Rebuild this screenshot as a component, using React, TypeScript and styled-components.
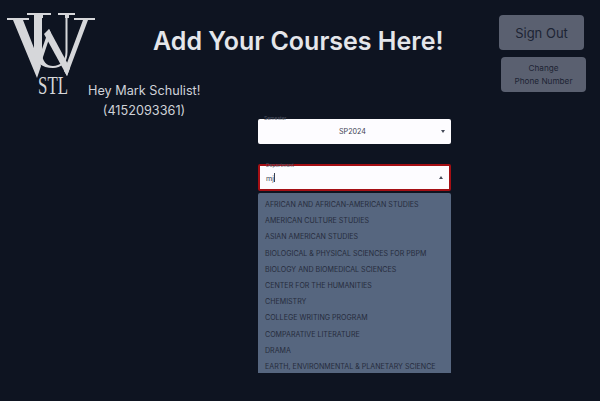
import styled, { createGlobalStyle } from "styled-components";

const departments = [
  "AFRICAN AND AFRICAN-AMERICAN STUDIES",
  "AMERICAN CULTURE STUDIES",
  "ASIAN AMERICAN STUDIES",
  "BIOLOGICAL & PHYSICAL SCIENCES FOR PBPM",
  "BIOLOGY AND BIOMEDICAL SCIENCES",
  "CENTER FOR THE HUMANITIES",
  "CHEMISTRY",
  "COLLEGE WRITING PROGRAM",
  "COMPARATIVE LITERATURE",
  "DRAMA",
  "EARTH, ENVIRONMENTAL & PLANETARY SCIENCE",
];

const GlobalStyle = createGlobalStyle`
  html, body {
    margin: 0;
    padding: 0;
    background: #0e1421;
    overflow: hidden;
  }
  * {
    box-sizing: border-box;
  }
`;

const Page = styled.div`
  width: 600px;
  height: 401px;
  overflow: hidden;
  background: #0e1421;
  font-family: Inter, "Noto Sans", sans-serif;
  display: flex;
  flex-direction: column;
`;

const Header = styled.header`
  height: 119px;
  flex-shrink: 0;
  padding-left: 7px;
  display: grid;
  grid-template-columns: 81px 65px 1fr 114px;
  grid-template-rows: 72px 1fr;
`;

const LogoSlot = styled.div`
  grid-column: 1;
  grid-row: 1 / 3;
  padding-top: 12px;
`;

const Greeting = styled.div`
  grid-column: 2 / 4;
  grid-row: 2;
  width: 112px;
  padding-top: 9px;
  text-align: center;
  white-space: nowrap;
  color: #cfd2d8;
  font-size: 12.7px;
  line-height: 20px;
`;

const Title = styled.h1`
  grid-column: 3;
  grid-row: 1;
  margin: 25px 0 0;
  color: #e4e6ea;
  font-size: 25px;
  line-height: 32px;
  font-weight: 600;
  white-space: nowrap;
`;

const Actions = styled.div`
  grid-column: 4;
  grid-row: 1 / 3;
  display: flex;
  flex-direction: column;
  gap: 7px;
  padding: 15px 0 0 13px;
`;

const HeaderButton = styled.button<{ $small?: boolean }>`
  border: none;
  border-radius: 4px;
  background: #5a6070;
  color: #1d2434;
  font-family: inherit;
  padding: 0;
  width: 85px;
  height: 35px;
  margin-left: ${(p) => (p.$small ? "2px" : "0")};
  font-size: ${(p) => (p.$small ? "8.2px" : "13px")};
  line-height: ${(p) => (p.$small ? "12.5px" : "18px")};
`;

const FormColumn = styled.main`
  width: 193px;
  margin-left: 258px;
  display: flex;
  flex-direction: column;
`;

const FieldLabel = styled.span`
  position: absolute;
  left: 6px;
  top: -4px;
  color: #4b5160;
  font-size: 5px;
  line-height: 6px;
`;

const Select = styled.div<{ $active?: boolean }>`
  position: relative;
  height: ${(p) => (p.$active ? "27px" : "25px")};
  display: flex;
  align-items: center;
  padding: 0 6px;
  background: #fdfcff;
  border-radius: 2px;
  border: ${(p) => (p.$active ? "2px solid #a50f14" : "none")};
  color: #3c4150;
  font-size: 7.2px;
  margin-bottom: ${(p) => (p.$active ? "2px" : "20px")};
`;

const SelectValue = styled.span<{ $centered?: boolean }>`
  flex: 1;
  text-align: ${(p) => (p.$centered ? "center" : "left")};
`;

const Caret = styled.span<{ $up?: boolean }>`
  width: 0;
  height: 0;
  border-left: 2.5px solid transparent;
  border-right: 2.5px solid transparent;
  ${(p) =>
    p.$up
      ? "border-bottom: 3px solid #444a58;"
      : "border-top: 3px solid #444a58;"}
`;

const Cursor = styled.span`
  display: inline-block;
  width: 1px;
  height: 9px;
  background: #3c4150;
  vertical-align: -1px;
`;

const Menu = styled.ul`
  list-style: none;
  margin: 0;
  padding: 4px 0 0;
  height: 180px;
  overflow: hidden;
  background: #56667f;
  border-radius: 2px 2px 0 0;
`;

const MenuItem = styled.li`
  height: 16.2px;
  line-height: 16.2px;
  padding-left: 7px;
  color: #262c3d;
  font-size: 7.1px;
  white-space: nowrap;
`;

// drawn in page coordinates, so the viewBox starts where the logo sits
const Logo = () => (
  <svg width="88" height="88" viewBox="7 12 88 88" fill="#d6d7da">
    {/* W: outer serifs and strokes */}
    <polygon points="7,18 29,18 29,20 23,20 41,66 37,78 13,20 7,20" />
    <polygon points="74,18 95,18 95,20 88,20 67,76 64,71 83,20 74,20" />
    <polygon points="44,34 49,29 70,68 67,76" />
    <polygon points="37,75 35,69 49,29 51,33" />
    {/* U: tall stems and bowl */}
    <polygon points="27,13 51,13 51,15 43,15 43,18 34,18 34,15 27,15" />
    <polygon points="58,13 75,13 75,15 69,15 69,18 65,18 65,15 58,15" />
    <path d="M34 15 L42 15 L42 52 C42 62 47 66 53 66 C60 66 65.5 61 65.5 52 L65.5 15 L67.5 15 L67.5 52 C67.5 63 61 68 53 68 C42 68 34 62 34 52 Z" />
    <text
      x="38"
      y="94"
      fontFamily="'Liberation Serif', serif"
      fontSize="26"
      textLength="30"
      lengthAdjust="spacingAndGlyphs"
    >
      STL
    </text>
  </svg>
);

const App = () => {
  return (
    <Page>
      <GlobalStyle />
      <Header>
        <LogoSlot>
          <Logo />
        </LogoSlot>
        <Title>Add Your Courses Here!</Title>
        <Greeting>
          Hey Mark Schulist!
          <br />
          (4152093361)
        </Greeting>
        <Actions>
          <HeaderButton>Sign Out</HeaderButton>
          <HeaderButton $small>
            Change
            <br />
            Phone Number
          </HeaderButton>
        </Actions>
      </Header>
      <FormColumn>
        <Select>
          <FieldLabel>Semester</FieldLabel>
          <SelectValue $centered>SP2024</SelectValue>
          <Caret />
        </Select>
        <Select $active>
          <FieldLabel>Department</FieldLabel>
          <SelectValue>
            mj
            <Cursor />
          </SelectValue>
          <Caret $up />
        </Select>
        <Menu>
          {departments.map((name) => (
            <MenuItem key={name}>{name}</MenuItem>
          ))}
        </Menu>
      </FormColumn>
    </Page>
  );
};

export default App;
